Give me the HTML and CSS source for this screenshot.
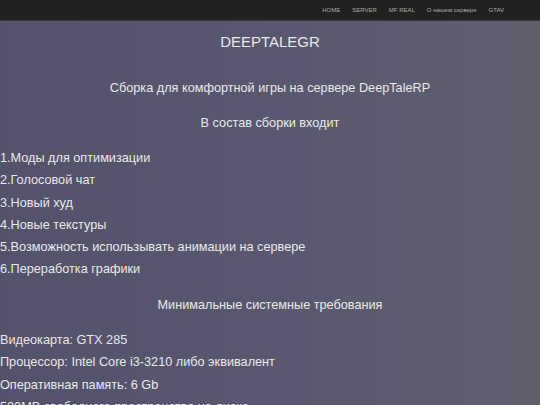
FILE: index.html
```html
<!DOCTYPE html>
<html lang="ru">
<head>
<meta charset="utf-8">
<title>DEEPTALEGR</title>
<link rel="stylesheet" href="styles.css">
</head>
<body>
<nav class="topbar">
  <a class="nav-link" href="#">HOME</a>
  <a class="nav-link" href="#">SERVER</a>
  <a class="nav-link" href="#">MF REAL</a>
  <a class="nav-link" href="#">О нашем сервере</a>
  <a class="nav-link" href="#">GTAV</a>
</nav>
<main class="content">
  <h1 class="title">DEEPTALEGR</h1>
  <p class="center-line">Сборка для комфортной игры на сервере DeepTaleRP</p>
  <p class="center-line">В состав сборки входит</p>
  <div class="list">
    <p class="item">1.Моды для оптимизации</p>
    <p class="item">2.Голосовой чат</p>
    <p class="item">3.Новый худ</p>
    <p class="item">4.Новые текстуры</p>
    <p class="item">5.Возможность использывать анимации на сервере</p>
    <p class="item">6.Переработка графики</p>
  </div>
  <p class="center-line">Минимальные системные требования</p>
  <div class="list specs">
    <p class="item">Видеокарта: GTX 285</p>
    <p class="item">Процессор: Intel Core i3-3210 либо эквивалент</p>
    <p class="item">Оперативная память: 6 Gb</p>
    <p class="item">500MB свободного пространства на диске</p>
  </div>
</main>
</body>
</html>
```

FILE: styles.css
```css
html, body {
  margin: 0;
  padding: 0;
  height: 100%;
  overflow: hidden;
}
body {
  font-family: "Liberation Sans", Arial, sans-serif;
  background: linear-gradient(to right, #54516a 0%, #5a5870 55%, #605f6d 100%);
  color: #e9e9e9;
}
.topbar {
  height: 21px;
  background: #212121;
  border-bottom: 1px solid #37353f;
  display: flex;
  justify-content: flex-end;
  align-items: center;
  gap: 12px;
  padding-right: 36px;
  box-sizing: border-box;
}
.nav-link {
  font-size: 6px;
  color: #a9a9a9;
  text-decoration: none;
}
.content {
  display: flex;
  flex-direction: column;
  gap: 13px;
  padding-top: 11px;
}
.title {
  margin: 0 0 12px 0;
  font-size: 15px;
  font-weight: normal;
  line-height: 20px;
  text-align: center;
}
.center-line {
  margin: 0;
  font-size: 12.7px;
  line-height: 22px;
  text-align: center;
}
.list {
  display: flex;
  flex-direction: column;
}
.item {
  margin: 0;
  font-size: 12.7px;
  line-height: 22.3px;
}
.specs .item {
  line-height: 22.5px;
}
```
